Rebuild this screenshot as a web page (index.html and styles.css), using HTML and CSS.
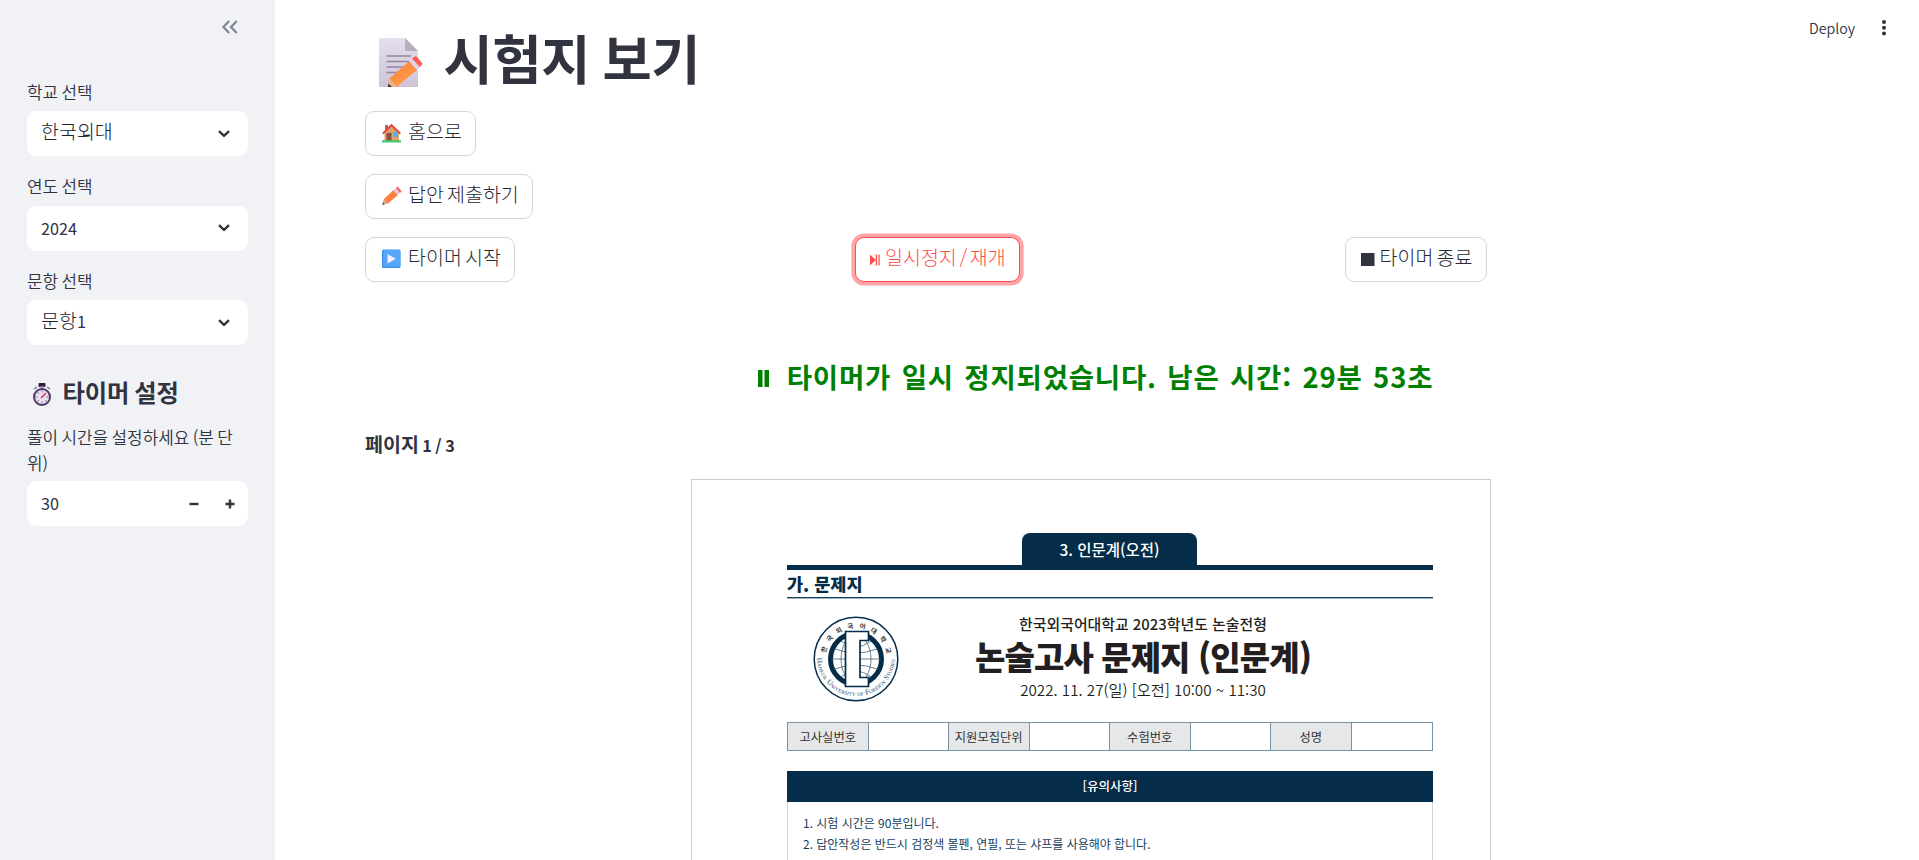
FILE: index.html
```html
<!DOCTYPE html>
<html lang="ko">
<head>
<meta charset="utf-8">
<title>시험지 보기</title>
<link rel="stylesheet" href="styles.css">
</head>
<body>
<div class="app">
  <aside class="sidebar">
    <div class="sidebar-head">
      <svg class="collapse" width="18" height="16" viewBox="0 0 18 16"><path d="M8.2 2 2.4 8l5.8 6M15.8 2 10 8l5.8 6"/></svg>
    </div>
    <div class="field">
      <div class="label">학교 선택</div>
      <div class="select"><span class="ko">한국외대</span><svg width="12" height="8" viewBox="0 0 12 8"><path d="M1 1.2 6 5.8 11 1.2"/></svg></div>
    </div>
    <div class="field">
      <div class="label">연도 선택</div>
      <div class="select"><span class="num">2024</span><svg width="12" height="8" viewBox="0 0 12 8"><path d="M1 1.2 6 5.8 11 1.2"/></svg></div>
    </div>
    <div class="field">
      <div class="label">문항 선택</div>
      <div class="select"><span class="ko">문항<span class="num">1</span></span><svg width="12" height="8" viewBox="0 0 12 8"><path d="M1 1.2 6 5.8 11 1.2"/></svg></div>
    </div>
    <h2 class="side-title">
      <svg width="20" height="24" viewBox="0 0 20 24"><rect x="6.5" y="0" width="7" height="4" rx="1" fill="#321b41"/><rect x="8.5" y="3" width="3" height="3" fill="#998ea4"/><path d="M2 6l3-2M18 6l-3-2" stroke="#998ea4" stroke-width="2"/><circle cx="10" cy="14" r="8" fill="#e9e1ef" stroke="#533566" stroke-width="2"/><g stroke="#998ea4" stroke-width="1.3"><path d="M10 7.5v2M10 18.500v2M3.500 14h2M14.500 14h2M5.400 9.400l1.400 1.400M13.200 17.200l1.400 1.400M5.400 18.600l1.400-1.400"/></g><path d="M9 15l5-5" stroke="#e5346c" stroke-width="1.700"/></svg>
      <span>타이머 설정</span>
    </h2>
    <div class="label wide">풀이 시간을 설정하세요 (분 단<br>위)</div>
    <div class="select number"><span class="num">30</span>
      <span class="steps"><svg width="10" height="10" viewBox="0 0 10 10"><path d="M.5 5h9"/></svg><svg width="10" height="10" viewBox="0 0 10 10"><path d="M.5 5h9M5 .5v9"/></svg></span>
    </div>
  </aside>

  <main class="main">
    <div class="toolbar"><span>Deploy</span><svg width="6" height="18" viewBox="0 0 6 18"><circle cx="3" cy="3" r="2"/><circle cx="3" cy="8.700" r="2"/><circle cx="3" cy="14.400" r="2"/></svg></div>
    <h1 class="title">
      <svg width="46" height="50" viewBox="0 0 46 50"><defs><linearGradient id="paper" x2="0" y2="1"><stop stop-color="#e5dfec"/><stop offset="1" stop-color="#cfc3d8"/></linearGradient><linearGradient id="wood" x2=".7" y2="1"><stop stop-color="#ff7a35"/><stop offset="1" stop-color="#ffa04a"/></linearGradient></defs><path d="M2 0h25l13 13v36H2q-1 0-1-1V1q0-1 1-1z" fill="url(#paper)"/><path d="M27 0l13 13H28q-1 0-1-1z" fill="#b9acc0"/><path d="M8.500 18H33M8.500 23.500H31M8.500 29H25M8.500 34.500H20" stroke="#94879d" stroke-width="1.600"/><path d="M31.500 23l7.500 9-17 14-3 3h-9l1.500-8.500z" fill="url(#wood)"/><path d="M11.500 40.500L18.500 47.500 17 49H10z" fill="#e6b58e"/><path d="M10.300 45.500l3.500 3.500H10z" fill="#4a2338"/><path d="M31 23l3-2.500 8 9-3 2.500z" fill="#e0d3ea"/><path d="M34 20.500l3-2q1-.5 2 .5l5 6q.700 1-.2 2l-2 2z" fill="#ff5b50"/></svg>
      <span>시험지 보기</span>
    </h1>
    <div class="stack">
      <button class="btn"><svg width="20" height="20" viewBox="0 0 20 20"><path d="M3 2h3v6H3z" fill="#a56953"/><path d="M2.500 9l7-7 7.500 7v9H2.500z" fill="#dda067"/><path d="M0 10L9.500.8 19 10l-1.500 1.200-8-7.700-8 7.700z" fill="#e8443c"/><path d="M4.500 10h5v8h-5z" fill="#8a4f43"/><path d="M11.500 9h4v5h-4z" fill="#47b4ef"/><path d="M0 17.200h19v2.300H0z" fill="#43c86c"/></svg><span>홈으로</span></button>
      <button class="btn"><svg width="20" height="20" viewBox="0 0 20 20"><path d="M11.500 4l4.500 5L6 17.500l-5.500 1L2 13z" fill="#ff8140"/><path d="M2 13l4 4.500-5.500 1.200z" fill="#d9a58a"/><path d="M.4 18.800l.6-2.200 1.500 1.700z" fill="#4a2338"/><path d="M11.500 4L14 2l4.200 5L16 9z" fill="#dccbe4"/><path d="M14 2l1.700-1.400L19.400 5l-1.300 2z" fill="#ff5a50"/></svg><span>답안 제출하기</span></button>
      <div class="row">
        <div><button class="btn"><svg width="20" height="20" viewBox="0 0 20 20"><rect x="0" y=".5" width="18.500" height="18.500" rx="1.500" fill="#3b8ee6"/><rect x="1.300" y="1" width="17" height="16.500" rx="1" fill="#55a7fb"/><path d="M5.500 5v9.500l8.300-4.700z" fill="#f7efff"/></svg><span>타이머 시작</span></button></div>
        <div><button class="btn active"><svg width="12" height="20" viewBox="0 0 12 20"><path d="M1 5.500v11L6.800 11z"/><path d="M6.800 5.500h1.300v11H6.800zM9.500 5.500h1.200v11H9.500z"/></svg><span>일시정지 / 재개</span></button></div>
        <div><button class="btn stop"><svg width="14" height="20" viewBox="0 0 14 20"><path d="M0 4h13.500v13H0z"/></svg><span>타이머 종료</span></button></div>
      </div>
    </div>
    <div class="status"><svg width="13" height="20" viewBox="0 0 13 20"><path d="M1 1h4.500v17H1zM7.500 1H12v17H7.500z"/></svg><span>타이머가 일시 정지되었습니다. 남은 시간: 29분 53초</span></div>
    <div class="page-no">페이지 <span>1 / 3</span></div>

    <section class="paper">
      <div class="tab"><span>3. 인문계(오전)</span></div>
      <div class="section-title"><span>가. 문제지</span></div>
      <div class="exam-head">
        <svg class="logo" width="86" height="86" viewBox="0 0 86 86">
          <defs><path id="top" d="M12 43a31 31 0 0 1 62 0"/><path id="bottom" d="M4 41a39 39 0 0 0 78 0"/></defs>
          <circle cx="43" cy="43" r="41.800" fill="#fff" stroke="#092f4c" stroke-width="1.500"/>
          <circle cx="43" cy="43" r="25.500" fill="#fff" stroke="#052c48" stroke-width="5"/>
          <g fill="none" stroke="#41617a" stroke-width=".8"><ellipse cx="43" cy="43" rx="15" ry="24"/><path d="M19 43h48M22 33q21 8 42 0M22 53q21-8 42 0M28 25q15 12 30 0M28 61q15-12 30 0"/></g>
          <path d="M32.500 15.500h23v9h-8.500v37h8.500v9h-23z" fill="#fff" stroke="#052c48" stroke-width="1.700"/>
          <text class="logo-ko"><textPath href="#top" startOffset="6" textLength="86">한국외국어대학교</textPath></text>
          <text class="logo-en"><textPath href="#bottom" startOffset="1" textLength="119">Hankuk University of Foreign Studies</textPath></text>
        </svg>
        <div class="exam-name">
          <div class="exam-sub">한국외국어대학교 2023학년도 논술전형</div>
          <div class="exam-title">논술고사 문제지 (인문계)</div>
          <div class="exam-date">2022. 11. 27(일) [오전] 10:00 ~ 11:30</div>
        </div>
      </div>
      <div class="ids"><b>고사실번호</b><i></i><b>지원모집단위</b><i></i><b>수험번호</b><i></i><b>성명</b><i></i></div>
      <div class="notice">
        <div class="notice-head">[유의사항]</div>
        <p class="n1">1. 시험 시간은 90분입니다.</p>
        <p class="n2">2. 답안작성은 반드시 검정색 볼펜, 연필, 또는 샤프를 사용해야 합니다.</p>
      </div>
    </section>
  </main>
</div>
</body>
</html>
```
FILE: styles.css
```css
* { box-sizing: border-box; }
body { margin: 0; background: #fff; color: #31333f; font-family: "Noto Sans CJK KR", "Noto Sans", sans-serif; }
svg { display: block; flex: none; }
.app { display: flex; width: 1919px; height: 860px; overflow: hidden; }

.sidebar { width: 275px; flex: none; background: #f0f2f6; padding: 0 27px; }
.sidebar-head { height: 78.5px; padding: 19px 9px 0 0; display: flex; justify-content: flex-end; }
.collapse { fill: none; stroke: #808390; stroke-width: 2.200; }
.label { height: 32.5px; line-height: 25px; font-size: 16.900px; font-weight: 350; word-spacing: -1.300px; white-space: nowrap; }
.field { margin-bottom: 17px; }
.select { height: 45px; background: #fff; border-radius: 9px; padding: 0 18px 0 14px; display: flex; align-items: center; justify-content: space-between; }
.select svg { fill: none; stroke: #31333f; stroke-width: 2.400; }
.ko { font-size: 19.500px; font-weight: 300; line-height: 40px; margin-bottom: 5px; color: #20222d; }
.num { font-size: 16.200px; font-weight: 400; color: #31333f; }
.side-title { margin: 0; height: 62px; padding: 0 0 0 5px; display: flex; align-items: center; gap: 10.500px; font-size: 24.300px; line-height: 36px; font-weight: 700; word-spacing: -1.500px; letter-spacing: -.150px; }
.side-title svg { margin-top: 3px; }
.side-title span { margin-bottom: 2px; }
.wide { height: 57px; line-height: 25.500px; }
.number { padding-right: 13px; }
.number .num { margin-bottom: 1px; }
.steps { display: flex; gap: 26px; }

.main { flex: 1; padding-left: 90px; position: relative; }
.toolbar { position: absolute; top: 17.500px; right: 32px; display: flex; gap: 26px; align-items: center; font-size: 14.200px; font-weight: 350; line-height: 20px; }
.toolbar span { margin-bottom: 2px; }
.toolbar svg { fill: #31333f; margin-top: -1px; }
.title { margin: 0; height: 111px; padding: 8px 0 0 13px; display: flex; align-items: center; gap: 19.500px; font-size: 53.500px; line-height: 70px; font-weight: 700; word-spacing: -2.500px; letter-spacing: -.300px; }
.title svg { margin-top: 6px; }
.title span { margin-bottom: 5px; }
.stack { display: flex; flex-direction: column; align-items: flex-start; gap: 18px; }
.row { display: grid; grid-template-columns: repeat(3, 472px); gap: 18px; }
.btn { height: 45px; border: 1px solid #d6d6d9; border-radius: 9px; background: #fff; color: #262833; padding: 0 13px 0 16px; display: flex; align-items: center; gap: 6px; font: 300 19.500px/38px "Noto Sans CJK KR", sans-serif; word-spacing: -2.300px; white-space: nowrap; }
.btn span { margin-bottom: 6px; }
.btn svg { margin-top: -1px; }
.btn.active { color: #ff4b4b; border-color: #ff4b4b; box-shadow: 0 0 0 3.600px rgba(255, 75, 75, .5); padding-left: 13px; gap: 4px; word-spacing: -2.800px; }
.btn.active svg { fill: #ff4b4b; }
.btn.stop { padding-left: 15px; padding-right: 14px; gap: 4.500px; }
.btn.stop svg { fill: #31333f; }
.status { width: 1460px; height: 40px; margin-top: 74px; display: flex; justify-content: center; align-items: center; gap: 17px; color: #008000; font-size: 27.500px; font-weight: 700; line-height: 40px; word-spacing: 2px; letter-spacing: .800px; white-space: nowrap; }
.status svg { fill: #008000; margin-top: 6px; }
.status span { margin-bottom: 1px; }
.page-no { margin-top: 32px; height: 51px; line-height: 32px; font-size: 19.500px; font-weight: 700; word-spacing: -2px; }
.page-no span { font-size: 16.200px; font-weight: 700; word-spacing: -1px; }

.paper { width: 800px; height: 1130px; margin-left: 326px; border: 1px solid #ccc; padding: 53px 57px 0 95px; color: #231f20; white-space: nowrap; }
.tab { display: flex; justify-content: center; border-bottom: 5px solid #052c48; }
.tab span { width: 175px; height: 32px; margin-right: 1px; border-radius: 8px 8px 0 0; background: #052c48; color: #fff; font-size: 15.500px; line-height: 32px; font-weight: 500; text-align: center; }
.section-title { height: 28px; border-bottom: 1px solid #17405c; box-shadow: 0 1px #9db2c0; color: #052c48; font-size: 17.500px; font-weight: 900; line-height: 27px; }
.exam-head { height: 124px; display: flex; padding: 18px 0 0 25px; }
.logo { margin: 0 -1px 0 1px; }
.exam-name { width: 490px; text-align: center; margin-top: -3px; }
.exam-sub { font-size: 14.900px; line-height: 22px; font-weight: 500; }
.exam-title { font-size: 33px; line-height: 42px; font-weight: 900; letter-spacing: -.900px; }
.exam-date { font-size: 15.200px; line-height: 24px; font-weight: 350; }
.ids { height: 29px; display: grid; grid-template-columns: repeat(8, 1fr); border: 1px solid #7893a5; }
.ids b, .ids i { height: 27px; border-right: 1px solid #7893a5; }
.ids i:last-child { border-right: 0; }
.ids b { background: #e6e7e9; color: #333; font-weight: 400; font-size: 12.300px; line-height: 28px; text-align: center; }
.notice { margin-top: 20px; height: 300px; border: 1px solid #ccd3dc; border-top: 0; color: #17405c; }
.notice-head { margin: 0 -1px; height: 31px; background: #052c48; color: #fff; text-align: center; font-size: 12.500px; font-weight: 500; line-height: 30px; }
.notice p { margin: 0; padding-left: 15px; font-size: 11.980px; line-height: 21px; }
.notice .n1 { margin-top: 10px; }
.logo-ko { font: 700 6.500px "Noto Sans CJK KR", sans-serif; fill: #333; }
.logo-en { font: 7.500px "Liberation Serif", serif; font-variant: small-caps; fill: #17405c; }
```
